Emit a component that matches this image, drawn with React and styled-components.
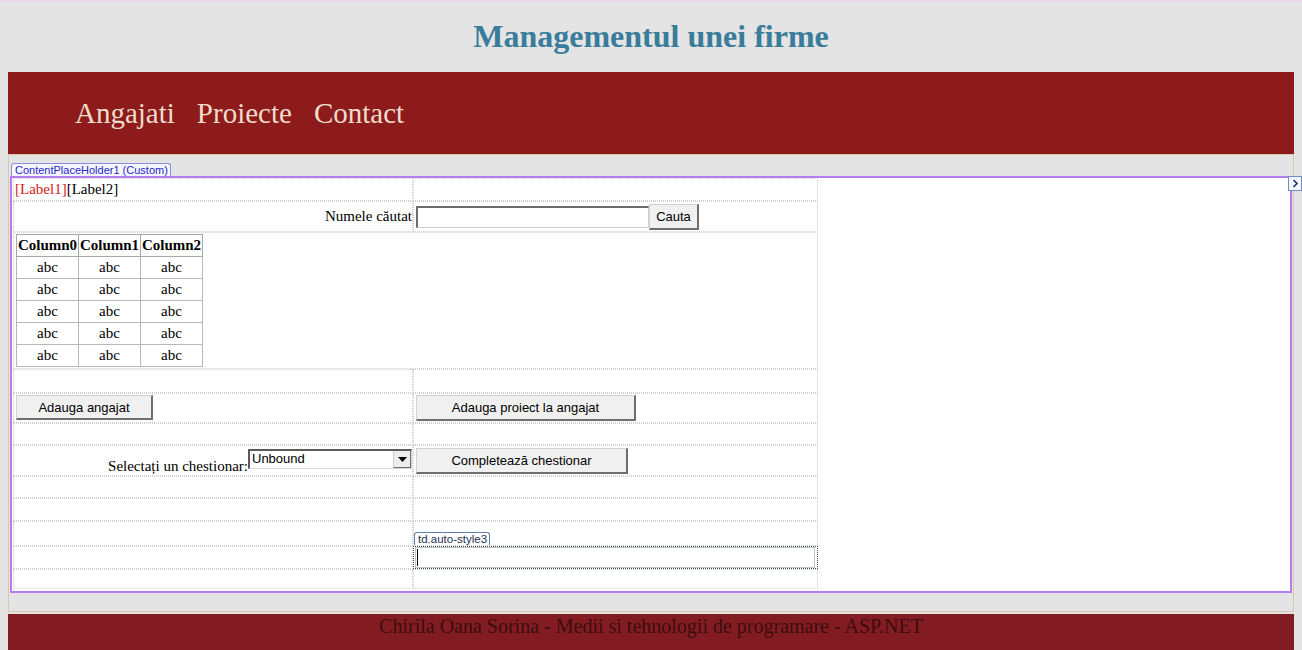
import React from 'react'
import styled, { createGlobalStyle } from 'styled-components'

const Global = createGlobalStyle`
  html, body {
    margin: 0;
    padding: 0;
    background: #e4e4e4;
  }
  body {
    font-family: "Liberation Serif", "Times New Roman", serif;
    font-size: 15px;
    color: #000;
  }
`;

const Page = styled.div`
  border-top: 2px solid #ecd6ee;
  padding: 0 8px;
  height: 648px;
  overflow: hidden;
`;

const Header = styled.header`
  height: 70px;
  display: flex;
  align-items: center;
  justify-content: center;
`;

const Title = styled.h1`
  margin: 0 0 2px 0;
  font-size: 32px;
  font-weight: bold;
  color: #3a7c9b;
`;

const Nav = styled.nav`
  height: 82px;
  background: #8e1b1b;
  display: flex;
  align-items: center;
  gap: 22px;
  padding-left: 67px;
`;

const NavLink = styled.a`
  font-size: 29px;
  color: #efdccb;
  text-decoration: none;
`;

const Content = styled.div`
  border: 1px solid #dcc6b0;
  padding: 8px 1px 18px 1px;
  background: #e4e4e4;
`;

const Tag = styled.span`
  display: block;
  width: fit-content;
  font-family: "Liberation Sans", Arial, sans-serif;
  font-size: ${p => p.$dark ? '11.5px' : '11px'};
  line-height: 12px;
  padding: 0 2px 0 3px;
  color: ${p => p.$dark ? '#1d2f55' : '#2727c8'};
  background: ${p => p.$dark ? '#fff' : '#f6f6ff'};
  border: 1px solid ${p => p.$dark ? '#5f7ea8' : '#8b8be6'};
  border-bottom: none;
  border-radius: 3px 3px 0 0;
  margin-left: ${p => p.$dark ? '0' : '1px'};
`;

const Holder = styled.div`
  position: relative;
  border: 2px solid #b47ef0;
  background: #fff;
  padding: 0 0 2px 1px;
`;

const SmartTag = styled.div`
  position: absolute;
  top: -2px;
  right: -12px;
  width: 12px;
  height: 13px;
  border: 1px solid #6f8fc4;
  background: #f4f7ff;
  display: flex;
  align-items: center;
  justify-content: center;
`;

const Layout = styled.div`
  display: grid;
  width: 805px;
  grid-template-columns: 400px 405px;
  grid-template-rows: 23px 31px 137px 24px 30px 22px 31px 22px 23px 25px 23px 20px;
`;

const Cell = styled.div`
  box-sizing: border-box;
  border: 1px dotted ${p => p.$selected ? '#3d4a5a' : '#d0d0d0'};
  grid-column: ${p => p.$span ? '1 / span 2' : 'auto'};
  display: flex;
  align-items: ${p => p.$align || 'center'};
  justify-content: ${p => p.$right ? 'flex-end' : 'flex-start'};
  padding-left: ${p => p.$pad ?? 1}px;
  white-space: nowrap;
`;

const Red = styled.span`
  color: #d42020;
`;

const Caption = styled.span`
  line-height: 18px;
`;

const TextBox = styled.div`
  box-sizing: border-box;
  width: ${p => p.$w}px;
  height: ${p => p.$h}px;
  border-top: 2px solid #6c6c6c;
  border-left: 2px solid #6c6c6c;
  border-right: 1px solid #cfcfcf;
  border-bottom: 1px solid #cfcfcf;
  background: #fff;
`;

const Button = styled.button`
  box-sizing: border-box;
  width: ${p => p.$w}px;
  height: ${p => p.$h || 26}px;
  margin: ${p => p.$m || '0'};
  font-family: "Liberation Sans", Arial, sans-serif;
  font-size: 13px;
  color: #000;
  background: #f0f0f0;
  border-top: 1px solid #d0d0d0;
  border-left: 1px solid #d0d0d0;
  border-right: 2px solid #6e6e6e;
  border-bottom: 2px solid #6e6e6e;
  padding: 0;
`;

const Grid = styled.table`
  border-collapse: collapse;
  margin: 1px 0 0 1px;
  border: 1px solid #a8a8a8;
  font-size: 15px;
`;

const Th = styled.th`
  border: 1px solid #a8a8a8;
  width: 61px;
  height: 21px;
  padding: 0;
  font-weight: bold;
`;

const Td = styled.td`
  border: 1px solid #b8b8b8;
  height: 21px;
  padding: 0;
  text-align: center;
`;

const Select = styled.div`
  box-sizing: border-box;
  width: 164px;
  height: 20px;
  margin-bottom: 6px;
  border-top: 2px solid #5a5a5a;
  border-left: 2px solid #5a5a5a;
  border-right: 1px solid #d6d6d6;
  border-bottom: 1px solid #d6d6d6;
  display: flex;
  font-family: "Liberation Sans", Arial, sans-serif;
  font-size: 13px;
`;

const SelectValue = styled.span`
  flex: 1;
  padding-left: 2px;
  line-height: 15px;
`;

const Arrow = styled.span`
  width: 16px;
  background: #ececec;
  border-left: 1px solid #d0d0d0;
  border-right: 1px solid #707070;
  border-bottom: 1px solid #707070;
  display: flex;
  align-items: center;
  justify-content: center;
`;

const Field = styled.div`
  box-sizing: border-box;
  width: 400px;
  height: 21px;
  margin-left: 1px;
  border: 1px solid #c4c4c4;
  display: flex;
  align-items: center;
  padding-left: 1px;
`;

const Caret = styled.span`
  width: 1px;
  height: 17px;
  background: #000;
`;

const Footer = styled.footer`
  margin-top: 2px;
  height: 40px;
  background: #831c22;
  display: flex;
  justify-content: center;
  font-size: 20px;
  line-height: 24px;
  color: #3b0c0e;
`;

const rows = [0, 1, 2, 3, 4];

export default function App() {
  return (
    <Page>
      <Global />
      <Header>
        <Title>Managementul unei firme</Title>
      </Header>
      <Nav>
        <NavLink>Angajati</NavLink>
        <NavLink>Proiecte</NavLink>
        <NavLink>Contact</NavLink>
      </Nav>
      <Content>
        <Tag>ContentPlaceHolder1 (Custom)</Tag>
        <Holder>
          <SmartTag>
            <svg width="7" height="9" viewBox="0 0 7 9">
              <path d="M1.5 1 L5 4.5 L1.5 8" fill="none" stroke="#1d2f6a" strokeWidth="1.6" />
            </svg>
          </SmartTag>
          <Layout>
            <Cell><Red>[Label1]</Red>[Label2]</Cell>
            <Cell />

            <Cell $right $pad={0}>Numele căutat</Cell>
            <Cell $pad={2}>
              <TextBox $w={233} $h={22} />
              <Button $w={50} $h={26}>Cauta</Button>
            </Cell>

            <Cell $span $align="flex-start">
              <Grid>
                <thead>
                  <tr><Th>Column0</Th><Th>Column1</Th><Th>Column2</Th></tr>
                </thead>
                <tbody>
                  {rows.map(r => (
                    <tr key={r}><Td>abc</Td><Td>abc</Td><Td>abc</Td></tr>
                  ))}
                </tbody>
              </Grid>
            </Cell>

            <Cell /><Cell />

            <Cell $align="flex-start"><Button $w={137} $h={25} $m="1px 0 0 1px">Adauga angajat</Button></Cell>
            <Cell $align="flex-start" $pad={2}><Button $w={220} $h={26} $m="1px 0 0 0">Adauga proiect la angajat</Button></Cell>

            <Cell /><Cell />

            <Cell $right $align="flex-end" $pad={0}>
              <Caption>Selectați un chestionar:</Caption>
              <Select>
                <SelectValue>Unbound</SelectValue>
                <Arrow>
                  <svg width="9" height="5" viewBox="0 0 9 5"><path d="M0 0 H9 L4.5 5 Z" fill="#000" /></svg>
                </Arrow>
              </Select>
            </Cell>
            <Cell $pad={2}><Button $w={212} $h={26}>Completează chestionar</Button></Cell>

            <Cell /><Cell />
            <Cell /><Cell />

            <Cell />
            <Cell $align="flex-end" $pad={0}><Tag $dark>td.auto-style3</Tag></Cell>

            <Cell />
            <Cell $selected $pad={0}><Field><Caret /></Field></Cell>

            <Cell /><Cell />
          </Layout>
        </Holder>
      </Content>
      <Footer>Chirila Oana Sorina - Medii si tehnologii de programare - ASP.NET</Footer>
    </Page>
  );
}
